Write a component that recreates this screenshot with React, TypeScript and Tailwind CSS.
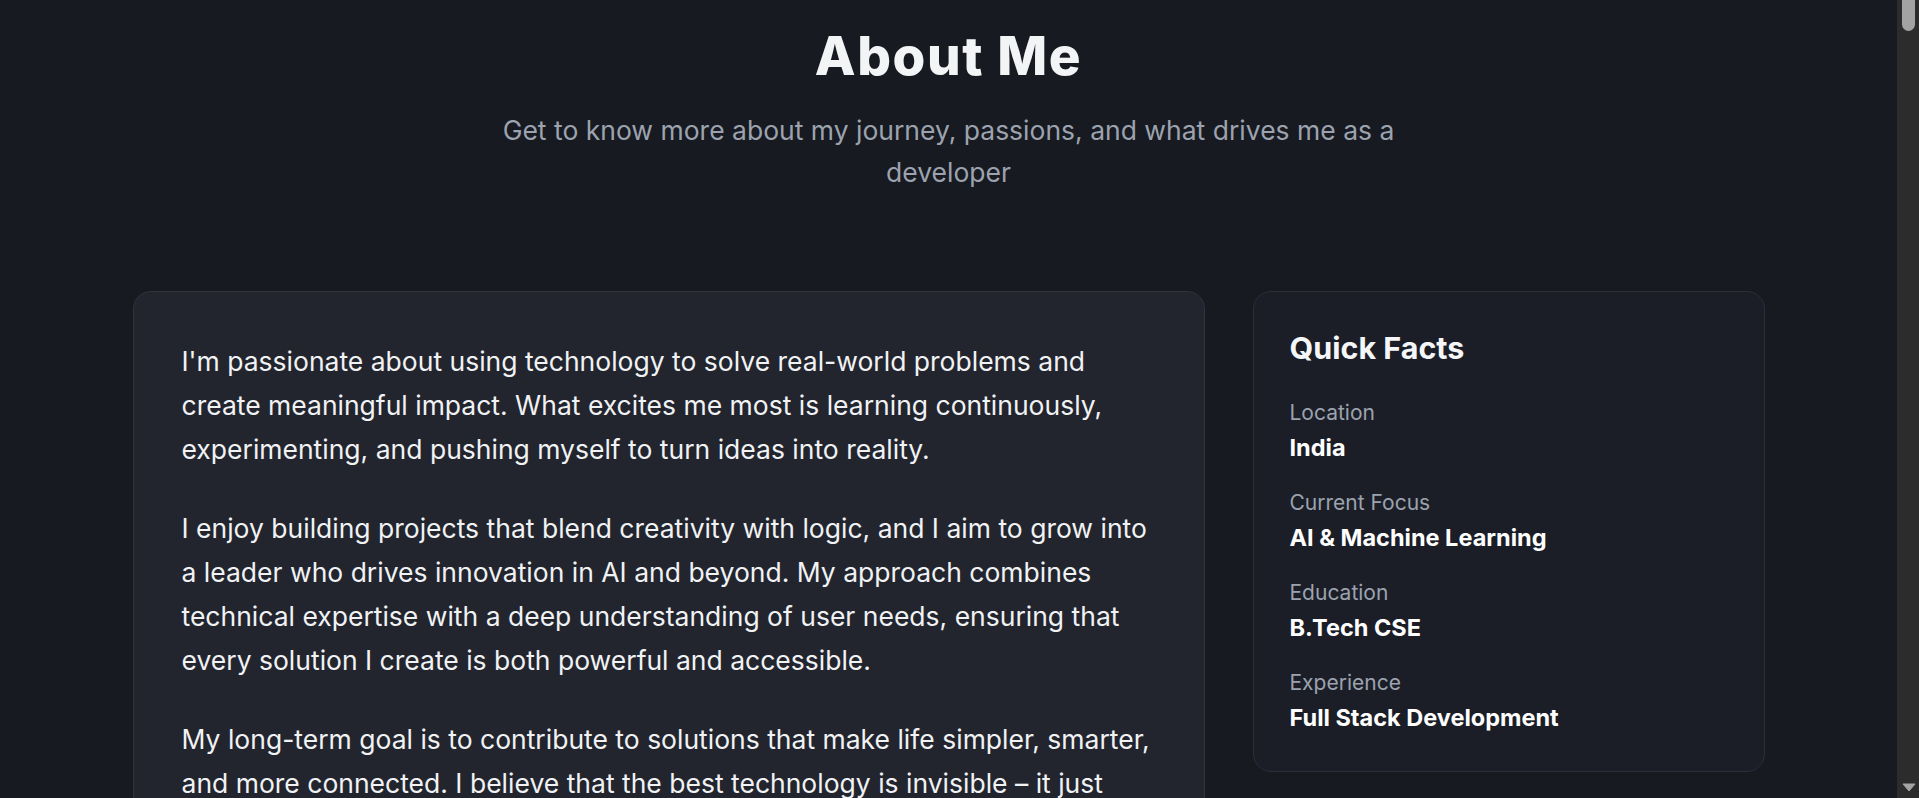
import React from 'react';

const facts = [
  { label: 'Location', value: 'India' },
  { label: 'Current Focus', value: 'AI & Machine Learning' },
  { label: 'Education', value: 'B.Tech CSE' },
  { label: 'Experience', value: 'Full Stack Development' },
];

const paragraphs = [
  "I'm passionate about using technology to solve real-world problems and create meaningful impact. What excites me most is learning continuously, experimenting, and pushing myself to turn ideas into reality.",
  'I enjoy building projects that blend creativity with logic, and I aim to grow into a leader who drives innovation in AI and beyond. My approach combines technical expertise with a deep understanding of user needs, ensuring that every solution I create is both powerful and accessible.',
  "My long-term goal is to contribute to solutions that make life simpler, smarter, and more connected. I believe that the best technology is invisible – it just works, quietly making people's everyday lives better.",
];

const ScrollBar: React.FC = () => (
  <div className="flex w-[22px] shrink-0 flex-col items-center justify-between bg-[#2c2c2c] pb-[6px]">
    <div className="ml-[1px] h-[31px] w-[13px] rounded-b-full bg-[#a3a3a3]" />
    <svg width="14" height="9" viewBox="0 0 14 9" className="ml-[1px]">
      <path d="M1 1h12L7 8z" fill="#a3a3a3" stroke="#a3a3a3" strokeLinejoin="round" />
    </svg>
  </div>
);

const App: React.FC = () => {
  return (
    <div className="flex h-screen bg-[#171a21] font-['Inter',sans-serif]">
      <main className="min-w-0 flex-1 overflow-hidden pt-[30px]">
        <div className="mx-auto w-[1632px]">
          {/* Heading */}
          <div className="text-center">
            <h2 className="text-[53px] leading-none font-extrabold tracking-[0.03em] text-[#f3f4f6]">
              About Me
            </h2>
            <p className="mx-auto mt-[26px] max-w-[960px] text-[26.5px] leading-[42px] text-[#9ca3af]">
              Get to know more about my journey, passions, and what drives me as a developer
            </p>
          </div>

          <div className="mt-[98px] grid grid-cols-3 items-start gap-12">
            {/* Story */}
            <div className="col-span-2 rounded-[18px] border border-[#30343f] bg-[#22252e] p-12">
              <div className="flex flex-col gap-9">
                {paragraphs.map((text, i) => (
                  <p key={i} className="text-[26.5px] leading-[43.75px] text-[#f1f2f4]">
                    {text}
                  </p>
                ))}
              </div>
            </div>

            {/* Quick facts */}
            <div className="rounded-[18px] border border-[#2b2f3a] bg-[#1b1e27] p-9">
              <h3 className="text-[30.5px] leading-[40px] font-bold text-[#f5f6f8]">
                Quick Facts
              </h3>
              <div className="mt-[30px] flex flex-col gap-[23px]">
                {facts.map((fact) => (
                  <div key={fact.label}>
                    <p className="text-[21px] leading-[30px] text-[#9ca3af]">{fact.label}</p>
                    <p className="mt-[2px] text-[23.5px] leading-[35px] font-bold text-white">
                      {fact.value}
                    </p>
                  </div>
                ))}
              </div>
            </div>
          </div>
        </div>
      </main>
      <ScrollBar />
    </div>
  );
};

export default App;
